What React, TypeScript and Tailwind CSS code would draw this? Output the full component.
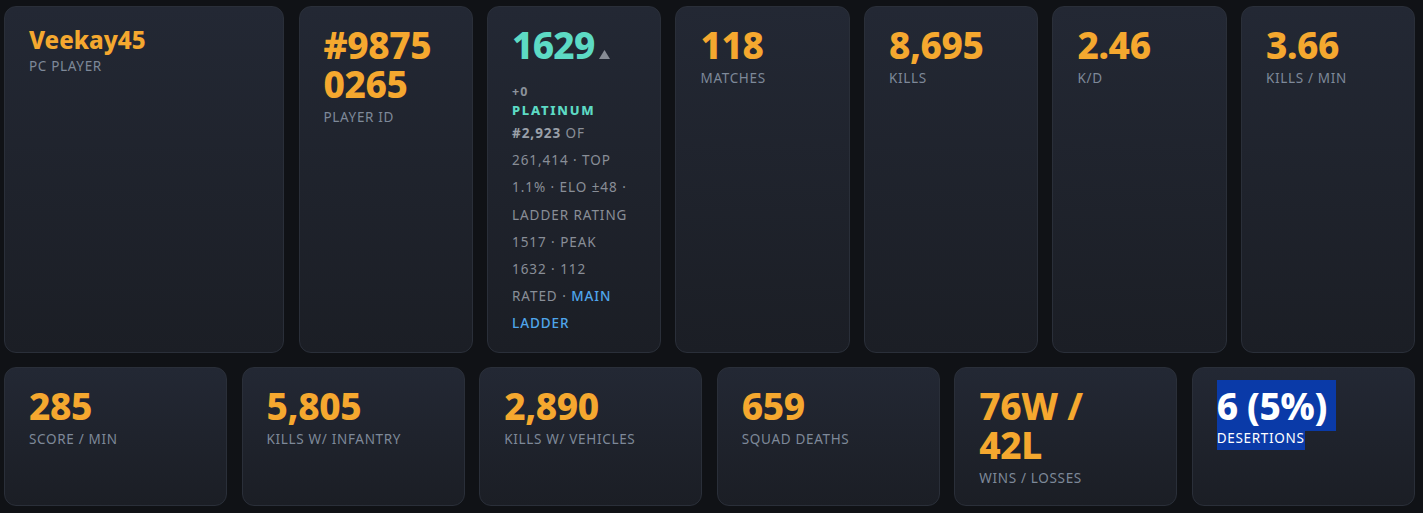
import React from "react";

const num =
  "text-[37px] font-extrabold leading-[39px] text-[#f5a82f] tracking-[-0.01em] whitespace-nowrap";
const label = "mt-[4px] text-[13.5px] leading-[21.5px] tracking-[0.05em] text-[#7e8999] uppercase";
const card =
  "rounded-xl border border-[#2a2f39] bg-gradient-to-b from-[#232834] to-[#1b1e25] pt-[18px] pb-4 px-6 min-w-0";

function Stat({ value, name }: { value: React.ReactNode; name: string }) {
  return (
    <div className={card}>
      <div className={num}>{value}</div>
      <div className={label}>{name}</div>
    </div>
  );
}

export default function App() {
  return (
    <div className="min-h-[513px] bg-[#101216] pl-1 pr-2 pt-[6px] pb-[6px] font-['Noto_Sans',sans-serif]">
      <div className="grid grid-cols-[280fr_repeat(6,174fr)] gap-[14.4px]">
        <div className={card}>
          <div className="text-[24px] font-extrabold leading-[29px] text-[#f5a82f]">Veekay45</div>
          <div className="mt-[2px] text-[13.5px] leading-[21.5px] tracking-[0.05em] text-[#7e8999] uppercase">
            PC Player
          </div>
        </div>
        <div className={card}>
          <div className={num}>
            #9875
            <br />
            0265
          </div>
          <div className={label}>Player ID</div>
        </div>
        <div className={card}>
          <div className="flex items-baseline">
            <span className="text-[37px] font-extrabold leading-[39px] text-[#5ddac4] tracking-[-0.02em]">
              1629
            </span>
            <svg width="11" height="9" viewBox="0 0 11 9" className="ml-[4px] self-baseline">
              <path d="M5.5 0 L11 9 L0 9 Z" fill="#878c95" />
            </svg>
          </div>
          <div className="mt-[19px] text-[12.5px] font-bold leading-[18px] tracking-[0.08em] text-[#8c929b]">+0</div>
          <div className="text-[13px] font-extrabold leading-[18px] tracking-[0.13em] text-[#5ddac4]">PLATINUM</div>
          <div className="mt-[1px] mb-[-2px] whitespace-nowrap text-[13.5px] leading-[27.2px] tracking-[0.07em] text-[#898e97] uppercase">
            <span className="font-bold text-[#9aa0a9]">#2,923</span> of
            <br />
            261,414 · top
            <br />
            1.1% · ELO ±48 ·
            <br />
            ladder rating
            <br />
            1517 · peak
            <br />
            1632 · 112
            <br />
            rated · <span className="font-medium text-[#4fa5eb]">Main</span>
            <br />
            <span className="font-medium text-[#4fa5eb]">ladder</span>
          </div>
        </div>
        <Stat value="118" name="Matches" />
        <Stat value="8,695" name="Kills" />
        <Stat value="2.46" name="K/D" />
        <Stat value="3.66" name="Kills / min" />
      </div>
      <div className="mt-[14px] grid grid-cols-6 gap-[14.4px]">
        <Stat value="285" name="Score / min" />
        <Stat value="5,805" name="Kills w/ infantry" />
        <Stat value="2,890" name="Kills w/ vehicles" />
        <Stat value="659" name="Squad deaths" />
        <Stat
          value={
            <>
              76W /
              <br />
              42L
            </>
          }
          name="Wins / losses"
        />
        <div className={card}>
          <div className={num}>
            <span className="bg-[#0a3aa8] text-white">6 (5%)&nbsp;</span>
          </div>
          <div className="mt-[1px] text-[13.5px] leading-[21.5px] tracking-[0.05em] uppercase">
            <span className="inline-block bg-[#0a3aa8] text-white leading-[24px]">DESERTIONS</span>
          </div>
        </div>
      </div>
    </div>
  );
}
